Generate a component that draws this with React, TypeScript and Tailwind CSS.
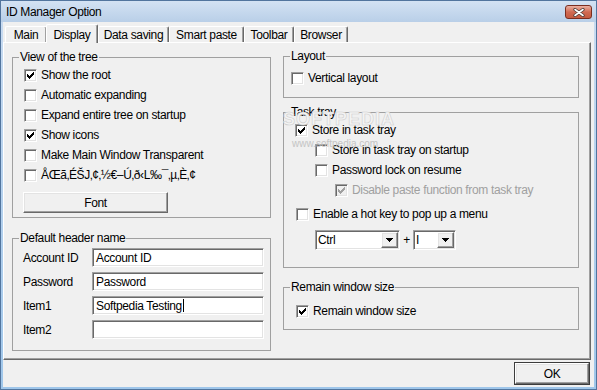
import React from 'react';

const sunken =
  'border border-t-[#a0a0a0] border-l-[#a0a0a0] border-r-white border-b-white shadow-[inset_1px_1px_0_#696969,inset_-1px_-1px_0_#e3e3e3]';
const raised =
  'border border-t-white border-l-white border-r-[#696969] border-b-[#696969] shadow-[inset_-1px_-1px_0_#a0a0a0,inset_1px_1px_0_#e3e3e3]';

// classic 7x7 tick, one 3px column per x
const tick = [2, 3, 4, 3, 2, 1, 0].map((y, i) => `M${2 + i} ${2 + y}h1v3h-1z`).join('');

function Box({ on, off }: { on?: boolean; off?: boolean }) {
  return (
    <span className={`block h-[13px] w-[13px] shrink-0 ${sunken} ${off ? 'bg-[#f0f0f0]' : 'bg-white'}`}>
      {on && (
        <svg width="11" height="11" viewBox="0 0 11 11" shapeRendering="crispEdges" className="block">
          <path d={tick} fill={off ? '#a0a0a0' : '#000'} />
        </svg>
      )}
    </span>
  );
}

function Row({ label, on, off, className = '' }: { label: string; on?: boolean; off?: boolean; className?: string }) {
  return (
    <div className={`flex h-[20px] items-center gap-[4px] ${className}`}>
      <Box on={on} off={off} />
      <span className={`whitespace-nowrap ${off ? 'text-[#a0a0a0]' : ''}`}>{label}</span>
    </div>
  );
}

function Group({
  title,
  className = '',
  inner = '',
  children,
}: {
  title: string;
  className?: string;
  inner?: string;
  children?: React.ReactNode;
}) {
  return (
    <fieldset className={`border border-[#a0a0a0] ${className}`}>
      <legend className="ml-[6px] px-[1px] leading-[15px]">{title}</legend>
      <div className={inner}>{children}</div>
    </fieldset>
  );
}

function Field({ label, value, caret }: { label: string; value?: string; caret?: boolean }) {
  return (
    <div className="flex h-[19px] items-center">
      <span className="w-[69px]">{label}</span>
      <div className={`flex h-[19px] w-[172px] items-center bg-white pl-[3px] ${sunken}`}>
        <span>{value}</span>
        {caret && <span className="ml-[1px] h-[13px] w-[1px] bg-black" />}
      </div>
    </div>
  );
}

function Combo({ value, width }: { value: string; width: string }) {
  return (
    <div className={`flex h-[20px] items-center bg-white ${sunken} ${width}`}>
      <span className="flex-1 pl-[2px]">{value}</span>
      <span className={`mr-[1px] flex h-[16px] w-[17px] items-center justify-center bg-[#f0f0f0] ${raised}`}>
        <svg width="7" height="4" viewBox="0 0 7 4" shapeRendering="crispEdges">
          <path d="M0 0h7v1H0zM1 1h5v1H1zM2 2h3v1H2zM3 3h1v1H3z" fill="#000" />
        </svg>
      </span>
    </div>
  );
}

const tabs = [
  { name: 'Main', w: 'w-[42px]' },
  { name: 'Display', w: 'w-[52px]', active: true },
  { name: 'Data saving', w: 'w-[71px]' },
  { name: 'Smart paste', w: 'w-[75px]' },
  { name: 'Toolbar', w: 'w-[50px]' },
  { name: 'Browser', w: 'w-[54px]' },
];

export default function App() {
  return (
    <div className="flex h-[390px] w-[597px] flex-col border border-[#52759e] bg-gradient-to-b from-[#cadcf1] to-[#9fc6ea] font-['Liberation_Sans',Arial,sans-serif] text-[12px] tracking-[-0.35px] text-black">
      {/* title bar */}
      <div className="flex h-[21px] items-start bg-gradient-to-b from-[#d3e2f3] to-[#b9cfe8]">
        <span className="pl-[5px] pt-[3px] text-[12px] leading-[16px]">ID Manager Option</span>
        <span className="ml-auto mr-[4px] mt-[4px] flex h-[14px] w-[27px] items-center justify-center rounded-[3px] border border-[#7a2e20] bg-gradient-to-b from-[#eab1a3] via-[#d06a52] to-[#c55a40]">
          <svg width="12" height="9" viewBox="0 0 12 9">
            <path d="M2 1.5l8 6M10 1.5l-8 6" stroke="#4a3a36" strokeWidth="3.2" strokeLinecap="round" />
            <path d="M2 1.5l8 6M10 1.5l-8 6" stroke="#fff" strokeWidth="1.6" strokeLinecap="round" />
          </svg>
        </span>
      </div>

      {/* client */}
      <div className="relative mx-[2px] mb-[2px] flex flex-1 flex-col bg-[#f0f0f0]">
        <div className="flex h-[20px] items-end pl-[2px]">
          {tabs.map((t) =>
            t.active ? (
              <div
                key={t.name}
                className={`relative z-10 -mb-[1px] -ml-[1px] flex h-[19px] items-start justify-center rounded-t-[2px] border-l border-r border-t border-l-white border-r-[#696969] border-t-white bg-[#f0f0f0] pt-[1px] shadow-[inset_-1px_0_0_#a0a0a0] ${t.w}`}
              >
                {t.name}
              </div>
            ) : (
              <div
                key={t.name}
                className={`flex h-[16px] items-center justify-center rounded-t-[2px] border-l border-r border-t border-l-white border-r-[#696969] border-t-white shadow-[inset_-1px_0_0_#a0a0a0] ${t.w}`}
              >
                {t.name}
              </div>
            ),
          )}
        </div>

        {/* tab panel */}
        <div className="flex h-[318px] w-[588px] border border-b-[#696969] border-l-white border-r-[#696969] border-t-white shadow-[inset_-1px_-1px_0_#a0a0a0]">
          <div className="ml-[8px] flex w-[259px] flex-col">
            <Group title="View of the tree" className="mt-[7px] h-[168px]" inner="pl-[11px]">
              <Row label="Show the root" on />
              <Row label="Automatic expanding" />
              <Row label="Expand entire tree on startup" />
              <Row label="Show icons" on />
              <Row label="Make Main Window Transparent" />
              <Row label="ÅŒã‚ÉŠJ‚¢‚½€–Ú‚ð‹L‰¯‚µ‚È‚¢" />
              <button
                className={`-ml-[1px] mt-[7px] flex h-[21px] w-[145px] items-center justify-center bg-[#f0f0f0] ${raised}`}
              >
                Font
              </button>
            </Group>
            <Group title="Default header name" className="mt-[13px] h-[120px]" inner="mt-[2px] flex flex-col gap-[5px] pl-[10px]">
              <Field label="Account ID" value="Account ID" />
              <Field label="Password" value="Password" />
              <Field label="Item1" value="Softpedia Testing" caret />
              <Field label="Item2" />
            </Group>
          </div>

          <div className="ml-[12px] flex w-[296px] flex-col">
            <Group title="Layout" className="mt-[6px] h-[49px]" inner="pl-[7px]">
              <Row label="Vertical layout" className="mt-[4px]" />
            </Group>
            <Group title="Task tray" className="mt-[7px] h-[163px]" inner="pl-[11px]">
              <Row label="Store in task tray" on />
              <Row label="Store in task tray on startup" className="ml-[20px]" />
              <Row label="Password lock on resume" className="ml-[20px]" />
              <Row label="Disable paste function from task tray" on off className="ml-[40px]" />
              <Row label="Enable a hot key to pop up a menu" className="ml-[1px] mt-[4px]" />
              <div className="ml-[20px] mt-[6px] flex items-center">
                <Combo value="Ctrl" width="w-[85px]" />
                <span className="w-[13px] text-center">+</span>
                <Combo value="I" width="w-[43px]" />
              </div>
            </Group>
            <Group title="Remain window size" className="mt-[12px] h-[50px]" inner="pl-[12px]">
              <Row label="Remain window size" on className="mt-[6px]" />
            </Group>
          </div>
        </div>

        <button
          className={`mr-[5px] mt-[3px] flex h-[21px] w-[74px] items-center justify-center self-end bg-[#f0f0f0] outline outline-1 outline-[#3c3c3c] ${raised}`}
        >
          OK
        </button>

        {/* watermark */}
        <div className="pointer-events-none absolute left-[280px] top-[88px] text-[18px] font-bold leading-none tracking-[1px] text-[#f4f4f4] [-webkit-text-stroke:0.6px_#cfcfcf]">
          SOFTPEDIA
        </div>
        <div className="pointer-events-none absolute left-[289px] top-[117px] text-[10px] leading-none tracking-normal text-[#c4c4c4]">
          www.softpedia.com
        </div>
      </div>
    </div>
  );
}
